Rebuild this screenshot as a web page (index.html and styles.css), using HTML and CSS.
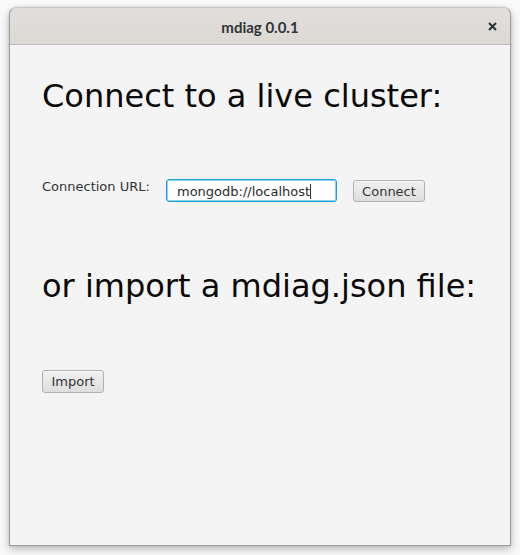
FILE: index.html
```html
<!DOCTYPE html>
<html>
<head>
<meta charset="utf-8">
<link rel="stylesheet" href="styles.css">
</head>
<body>
<div class="desktop">
  <div class="window">
    <div class="titlebar">
      <span class="title">mdiag 0.0.1</span>
      <svg class="close" width="9" height="9" viewBox="0 0 9 9"><path d="M1 1 L8 8 M8 1 L1 8" stroke="#2e3436" stroke-width="2" stroke-linecap="butt"/></svg>
    </div>
    <div class="content">
      <h1 class="heading">Connect to a live cluster:</h1>
      <div class="row">
        <span class="label">Connection URL:</span>
        <div class="textfield">mongodb://localhost<span class="caret"></span></div>
        <button class="btn btn-connect">Connect</button>
      </div>
      <h1 class="heading heading-2">or import a mdiag.json file:</h1>
      <button class="btn btn-import">Import</button>
    </div>
  </div>
</div>
</body>
</html>
```

FILE: styles.css
```css
html, body {
  margin: 0;
  padding: 0;
  background: #ffffff;
}

.desktop {
  width: 520px;
  height: 555px;
  padding: 7px 0 0 9px;
  box-sizing: border-box;
  background: #fafafa;
}

.window {
  width: 502px;
  height: 539px;
  box-sizing: border-box;
  border: 1px solid #9d9d9d;
  border-top-color: #c9c6c3;
  border-radius: 8px 8px 0 0;
  background: #f4f4f4;
  box-shadow: 0 3px 9px rgba(0, 0, 0, 0.28), 0 0 2px rgba(0, 0, 0, 0.15);
  display: flex;
  flex-direction: column;
  overflow: hidden;
}

.titlebar {
  height: 36px;
  flex: none;
  position: relative;
  display: flex;
  align-items: center;
  justify-content: center;
  background: linear-gradient(#e1dedb, #dcd9d5);
  border-bottom: 1px solid #bfb8b1;
  border-radius: 7px 7px 0 0;
}

.title {
  font-family: Lato, "Noto Sans", sans-serif;
  font-weight: bold;
  font-size: 15px;
  color: #2e3436;
  margin-top: 1px;
}

.close {
  position: absolute;
  right: 13px;
  top: 14px;
}

.content {
  flex: 1;
  padding: 32px 0 0 32px;
  font-family: "DejaVu Sans", sans-serif;
  color: #333333;
}

.heading {
  margin: 0;
  font-family: "DejaVu Sans", sans-serif;
  font-weight: normal;
  font-size: 32px;
  line-height: 38px;
  color: #0a0a0a;
}

.heading-2 {
  margin-top: 65px;
  margin-bottom: 65px;
}

.row {
  display: flex;
  align-items: flex-start;
  margin-top: 64px;
}

.label {
  font-size: 13px;
  line-height: 16px;
  color: #333333;
  width: 108px;
}

.textfield {
  margin-left: 16px;
  width: 171px;
  height: 23px;
  box-sizing: border-box;
  border: 1px solid #1d9fd8;
  box-shadow: inset 0 0 0 1px rgba(3, 158, 211, 0.45);
  border-radius: 3px;
  background: #ffffff;
  font-size: 13px;
  line-height: 21px;
  padding: 2px 0 0 10px;
  color: #2a2a2a;
  white-space: nowrap;
  display: flex;
  align-items: center;
}

.caret {
  display: inline-block;
  width: 1px;
  height: 15px;
  background: #333333;
}

.btn {
  font-family: "DejaVu Sans", sans-serif;
  font-size: 13px;
  color: #333333;
  background: linear-gradient(#f1f1f1, #dedede);
  border: 1px solid #b1b1b1;
  border-radius: 3px;
  padding: 0 8px;
  height: 23px;
  line-height: 21px;
  box-shadow: inset 0 1px 0 rgba(255, 255, 255, 0.6);
}

.btn-connect {
  margin-left: 16px;
  margin-top: 1px;
  height: 22px;
  width: 72px;
}

.btn-import {
  display: block;
  width: 62px;
  padding: 0;
}
```
